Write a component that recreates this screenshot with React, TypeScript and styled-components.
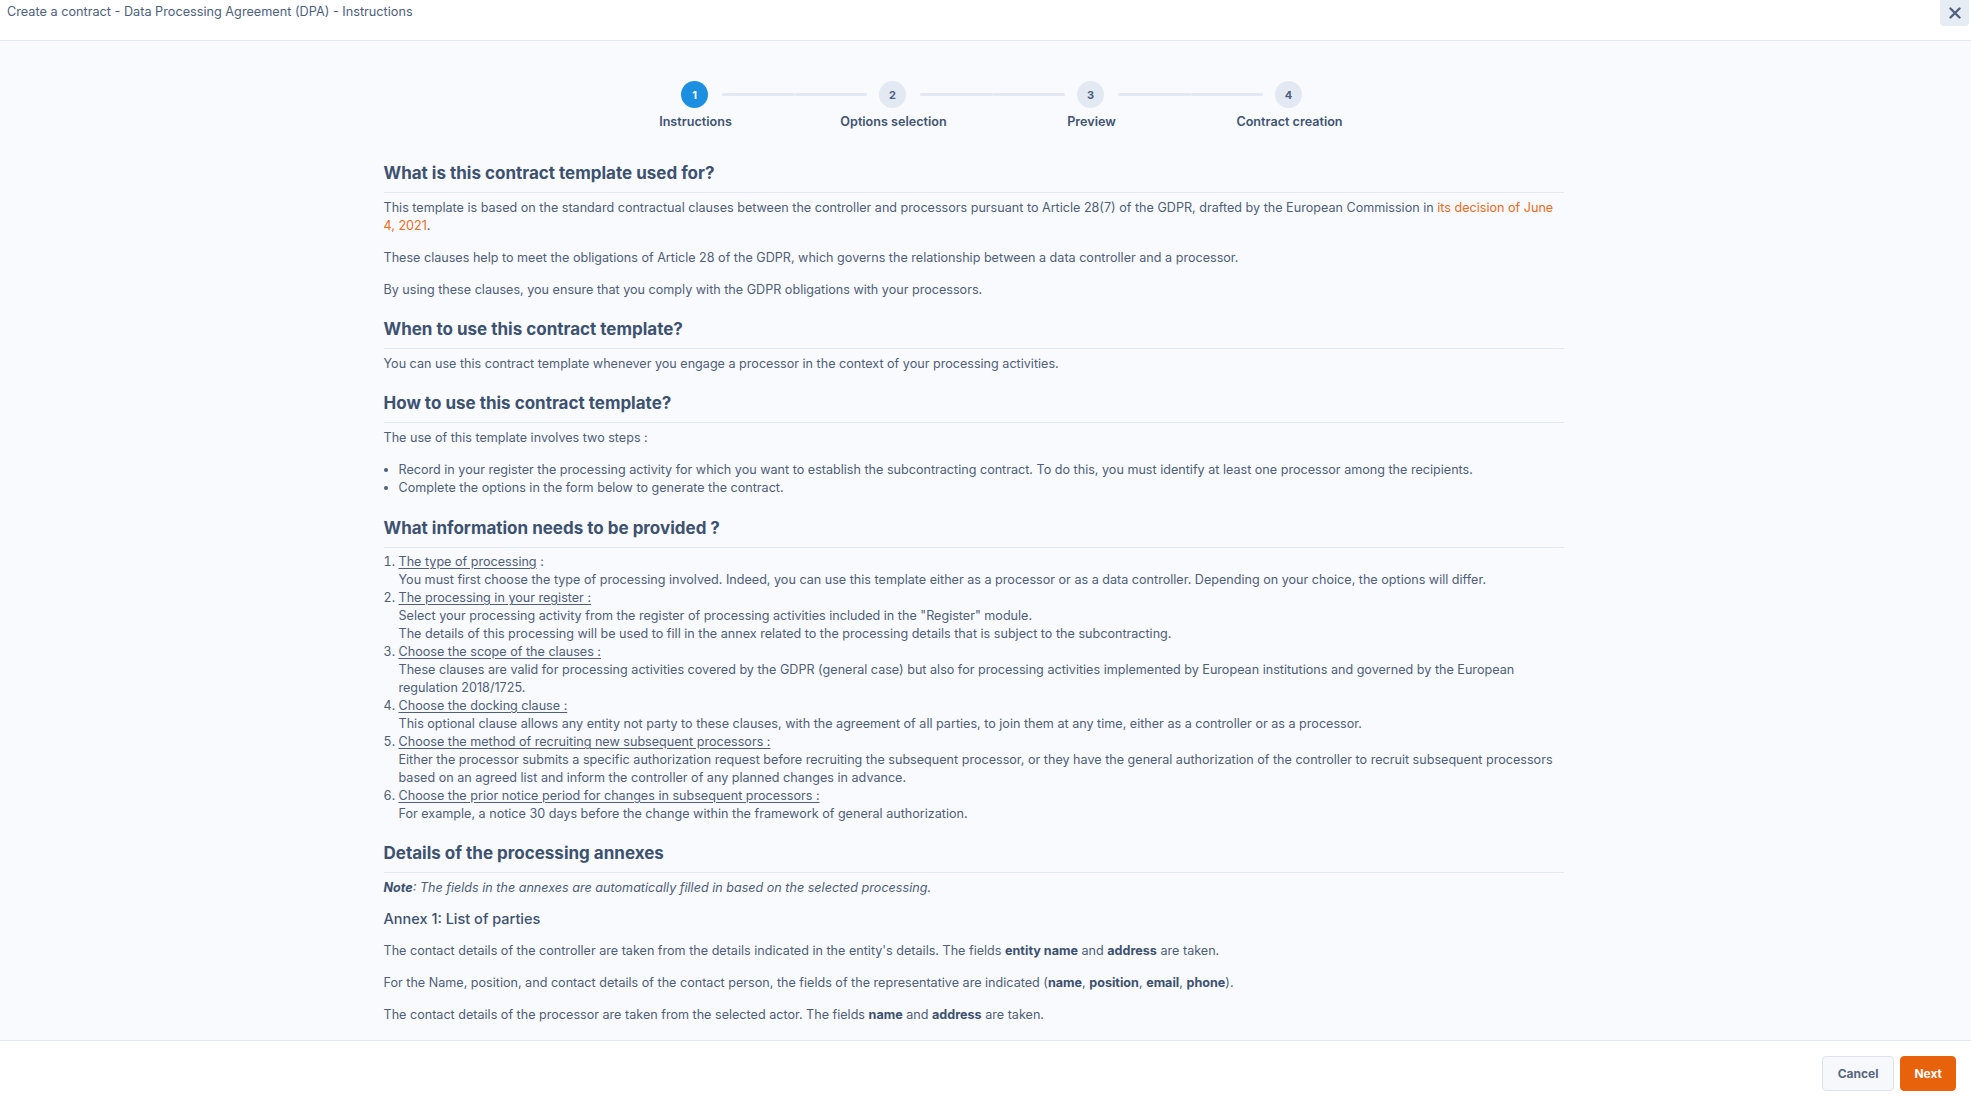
import React from "react";
import styled, { createGlobalStyle } from "styled-components";

const GlobalStyle = createGlobalStyle`
  html, body {
    margin: 0;
    height: 100%;
    overflow: hidden;
  }
  body {
    font-family: Inter, "Open Sans", sans-serif;
    color: #4f5e79;
  }
  * {
    box-sizing: border-box;
  }
`;

const steps = ["Instructions", "Options selection", "Preview", "Contract creation"];

function CloseIcon() {
  return (
    <svg width="12" height="12" viewBox="0 0 12 12" fill="none">
      <path d="M1.5 1.5L10.5 10.5M10.5 1.5L1.5 10.5" stroke="#52627d" strokeWidth="2.4" strokeLinecap="round" />
    </svg>
  );
}

export default function App() {
  return (
    <>
      <GlobalStyle />
      <StyledShell>
        <StyledTopBar>
          <StyledTitle>Create a contract - Data Processing Agreement (DPA) - Instructions</StyledTitle>
          <StyledCloseButton aria-label="close">
            <CloseIcon />
          </StyledCloseButton>
        </StyledTopBar>

        <StyledScroller>
          <StyledStepper>
            {steps.map((label, i) => (
              <StyledStep key={label}>
                <StyledTrack>
                  <StyledRail $side="left" $visible={i > 0} />
                  <StyledDot $active={i === 0}>{i + 1}</StyledDot>
                  <StyledRail $side="right" $visible={i < steps.length - 1} />
                </StyledTrack>
                <StyledStepLabel>{label}</StyledStepLabel>
              </StyledStep>
            ))}
          </StyledStepper>

          <StyledContent>
            <StyledSectionTitle>What is this contract template used for?</StyledSectionTitle>
            <StyledPara>
              This template is based on the standard contractual clauses between the controller and processors
              pursuant to Article 28(7) of the GDPR, drafted by the European Commission in{" "}
              <StyledLink href="#">its decision of June 4, 2021</StyledLink>.
            </StyledPara>
            <StyledPara>
              These clauses help to meet the obligations of Article 28 of the GDPR, which governs the relationship
              between a data controller and a processor.
            </StyledPara>
            <StyledPara>
              By using these clauses, you ensure that you comply with the GDPR obligations with your processors.
            </StyledPara>

            <StyledSectionTitle>When to use this contract template?</StyledSectionTitle>
            <StyledPara>
              You can use this contract template whenever you engage a processor in the context of your processing
              activities.
            </StyledPara>

            <StyledSectionTitle>How to use this contract template?</StyledSectionTitle>
            <StyledPara>The use of this template involves two steps :</StyledPara>
            <StyledBulletList>
              <li>
                Record in your register the processing activity for which you want to establish the subcontracting
                contract. To do this, you must identify at least one processor among the recipients.
              </li>
              <li>Complete the options in the form below to generate the contract.</li>
            </StyledBulletList>

            <StyledSectionTitle>What information needs to be provided ?</StyledSectionTitle>
            <StyledNumberList>
              <li>
                <StyledItemTitle>The type of processing</StyledItemTitle> :
                <StyledItemText>
                  You must first choose the type of processing involved. Indeed, you can use this template either as a
                  processor or as a data controller. Depending on your choice, the options will differ.
                </StyledItemText>
              </li>
              <li>
                <StyledItemTitle>The processing in your register :</StyledItemTitle>
                <StyledItemText>
                  Select your processing activity from the register of processing activities included in the
                  "Register" module.
                </StyledItemText>
                <StyledItemText>
                  The details of this processing will be used to fill in the annex related to the processing details
                  that is subject to the subcontracting.
                </StyledItemText>
              </li>
              <li>
                <StyledItemTitle>Choose the scope of the clauses :</StyledItemTitle>
                <StyledItemText>
                  These clauses are valid for processing activities covered by the GDPR (general case) but also for
                  processing activities implemented by European institutions and governed by the European regulation
                  2018/1725.
                </StyledItemText>
              </li>
              <li>
                <StyledItemTitle>Choose the docking clause :</StyledItemTitle>
                <StyledItemText>
                  This optional clause allows any entity not party to these clauses, with the agreement of all parties,
                  to join them at any time, either as a controller or as a processor.
                </StyledItemText>
              </li>
              <li>
                <StyledItemTitle>Choose the method of recruiting new subsequent processors :</StyledItemTitle>
                <StyledItemText>
                  Either the processor submits a specific authorization request before recruiting the subsequent
                  processor, or they have the general authorization of the controller to recruit subsequent processors
                  based on an agreed list and inform the controller of any planned changes in advance.
                </StyledItemText>
              </li>
              <li>
                <StyledItemTitle>Choose the prior notice period for changes in subsequent processors :</StyledItemTitle>
                <StyledItemText>
                  For example, a notice 30 days before the change within the framework of general authorization.
                </StyledItemText>
              </li>
            </StyledNumberList>

            <StyledSectionTitle>Details of the processing annexes</StyledSectionTitle>
            <StyledNote>
              <strong>Note</strong>: The fields in the annexes are automatically filled in based on the selected
              processing.
            </StyledNote>

            <StyledSubTitle>Annex 1: List of parties</StyledSubTitle>
            <StyledPara>
              The contact details of the controller are taken from the details indicated in the entity's details. The
              fields <StyledStrong>entity name</StyledStrong> and <StyledStrong>address</StyledStrong> are taken.
            </StyledPara>
            <StyledPara>
              For the Name, position, and contact details of the contact person, the fields of the representative are
              indicated (<StyledStrong>name</StyledStrong>, <StyledStrong>position</StyledStrong>,{" "}
              <StyledStrong>email</StyledStrong>, <StyledStrong>phone</StyledStrong>).
            </StyledPara>
            <StyledPara>
              The contact details of the processor are taken from the selected actor. The fields{" "}
              <StyledStrong>name</StyledStrong> and <StyledStrong>address</StyledStrong> are taken.
            </StyledPara>
          </StyledContent>
        </StyledScroller>

        <StyledFooter>
          <StyledButton>Cancel</StyledButton>
          <StyledButton $primary>Next</StyledButton>
        </StyledFooter>
      </StyledShell>
    </>
  );
}

const StyledShell = styled.div`
  height: 100vh;
  display: flex;
  flex-direction: column;
  background-color: #f8fafd;
`;

const StyledTopBar = styled.header`
  flex: 0 0 41px;
  display: flex;
  justify-content: space-between;
  align-items: flex-start;
  background-color: #ffffff;
  border-bottom: 1px solid #e2e9f3;
`;

const StyledTitle = styled.h1`
  margin: 0;
  padding: 3px 7px;
  font-size: 12.7px;
  font-weight: 400;
  line-height: 18px;
  color: #4d5f80;
`;

const StyledCloseButton = styled.button`
  width: 29px;
  height: 26px;
  margin-right: 2px;
  padding: 0;
  border: none;
  border-radius: 0 0 4px 4px;
  background-color: #e6ecf4;
  display: flex;
  align-items: center;
  justify-content: center;
  cursor: pointer;
`;

const StyledScroller = styled.main`
  flex: 1;
  overflow: hidden;
  padding: 40px 24px 0 0;
`;

const StyledStepper = styled.ol`
  display: flex;
  justify-content: center;
  margin: 0 0 32px;
  padding: 0 0 0 38px;
  list-style: none;
`;

const StyledStep = styled.li`
  width: 198px;
  display: flex;
  flex-direction: column;
  align-items: center;
`;

const StyledTrack = styled.div`
  width: 100%;
  height: 27px;
  display: flex;
  align-items: center;
`;

const StyledRail = styled.span<{ $side: "left" | "right"; $visible: boolean }>`
  flex: 1;
  height: 3px;
  border-radius: 2px;
  background-color: ${({ $visible }) => ($visible ? "#e3e9f2" : "transparent")};
  margin: ${({ $side }) => ($side === "left" ? "0 12px 0 0" : "0 0 0 14px")};
`;

const StyledDot = styled.span<{ $active?: boolean }>`
  flex: 0 0 27px;
  height: 27px;
  border-radius: 50%;
  display: flex;
  align-items: center;
  justify-content: center;
  font-size: 11px;
  font-weight: 700;
  color: ${({ $active }) => ($active ? "#ffffff" : "#4a5d7e")};
  background-color: ${({ $active }) => ($active ? "#1d8fe1" : "#e3e9f2")};
`;

const StyledStepLabel = styled.span`
  margin-top: 5px;
  font-size: 12.6px;
  font-weight: 600;
  line-height: 18px;
  color: #3f5373;
  white-space: nowrap;
`;

const StyledContent = styled.article`
  max-width: 1180px;
  margin: 0 auto;
`;

const StyledSectionTitle = styled.h2`
  margin: 20px 0 6px;
  padding-bottom: 9px;
  border-bottom: 1px solid #e3e9f1;
  font-size: 17px;
  font-weight: 700;
  line-height: 20px;
  color: #3d5170;
`;

const StyledSubTitle = styled.h3`
  margin: 0 0 14px;
  font-size: 14.5px;
  font-weight: 500;
  line-height: 18px;
  color: #3d5170;
`;

const StyledPara = styled.p`
  margin: 0 0 14px;
  font-size: 12.6px;
  line-height: 18px;
`;

const StyledNote = styled(StyledPara)`
  margin-bottom: 13px;
  font-style: italic;

  strong {
    font-weight: 700;
    color: #3d5170;
  }
`;

const StyledLink = styled.a`
  color: #ef6a1c;
  text-decoration: none;
`;

const StyledStrong = styled.strong`
  font-weight: 700;
  color: #3d5170;
`;

const StyledBulletList = styled.ul`
  margin: 0 0 21px;
  padding-left: 15px;
  font-size: 12.6px;
  line-height: 18px;
`;

const StyledNumberList = styled.ol`
  margin: -1px 0 14px;
  padding-left: 15px;
  font-size: 12.6px;
  line-height: 18px;
`;

const StyledItemTitle = styled.span`
  text-decoration: underline;
  text-underline-offset: 2px;
`;

const StyledItemText = styled.span`
  display: block;
`;

const StyledFooter = styled.footer`
  flex: 0 0 59px;
  display: flex;
  justify-content: flex-end;
  align-items: flex-start;
  gap: 6px;
  padding: 15px 15px 0;
  background-color: #ffffff;
  border-top: 1px solid #e2e9f3;
`;

const StyledButton = styled.button<{ $primary?: boolean }>`
  height: 35px;
  padding: ${({ $primary }) => ($primary ? "0 13px" : "0 15px")};
  border-radius: 4px;
  border: 1px solid ${({ $primary }) => ($primary ? "#e8620c" : "#dde4ee")};
  background-color: ${({ $primary }) => ($primary ? "#e8620c" : "#f6f8fc")};
  color: ${({ $primary }) => ($primary ? "#ffffff" : "#56657f")};
  font-family: Inter, sans-serif;
  font-size: 12px;
  font-weight: 700;
  cursor: pointer;
`;
